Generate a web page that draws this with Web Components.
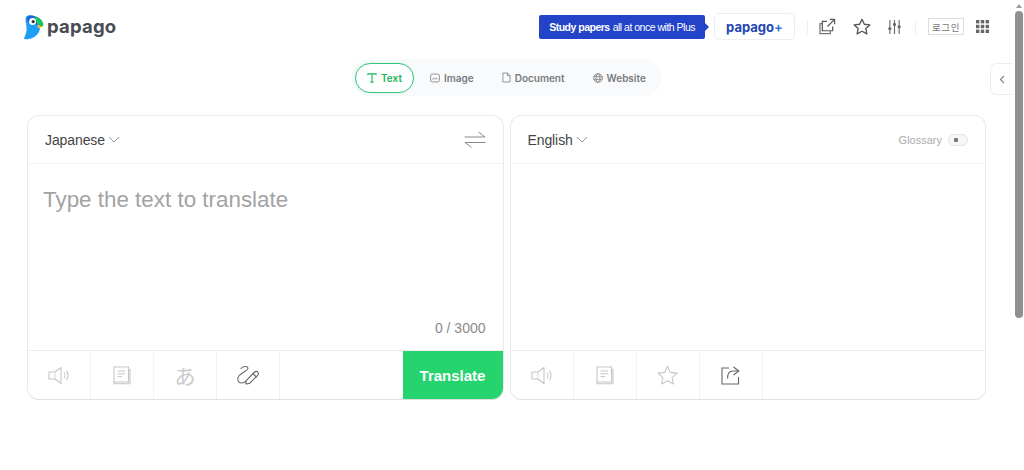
<!DOCTYPE html>
<html lang="en">
<head>
<meta charset="utf-8">
<title>papago</title>
<style>
    html, body { margin: 0; padding: 0; background: #fff; overflow: hidden; }
</style>
</head>
<body>
<pg-root></pg-root>
<script>
/**
 * Inline icons used across the page, keyed by name.
 * @type {Object<string, string>}
 */
const ICONS = {
    logo: `<svg width="20" height="25" viewBox="0 0 20 25">
        <path d="M5 0.5C2.5 0.5 1.5 2 1.5 4.5C1.5 8.5 3 11 2.6 15C2.3 18 1.2 20.6 0 23.5C0.5 24.4 2.5 24.6 5 24C10.5 22.8 15 19 15.8 14.2C16 12.8 15.8 11.6 15.5 10.5L12 8L12 2C10 0.8 7.5 0.5 5 0.5Z" fill="#1d9ff5"/>
        <path d="M5 0.5C8 0.2 11 0.8 13.5 2.2C16.6 3.8 18.8 6 19.2 9.6C19.3 10.8 18.2 12 17 11.4C15.8 10.8 15 9.8 13.4 9.8L8 9L3.4 6.4C2.9 3.4 3 1.2 5 0.5Z" fill="#1f63d8"/>
        <path d="M10 2C13.5 2 17 4 18.8 7.4C19.4 8.7 19.4 10.4 18.6 11.6C17.6 10.3 15.8 9.6 13.6 9.8C12.6 6.8 11.4 4.3 10 2Z" fill="#16c75e"/>
        <circle cx="8.6" cy="6.6" r="3.5" fill="#fff"/>
        <circle cx="9.2" cy="6.6" r="1.6" fill="#333"/>
        <path d="M13.4 9.8L18.2 11.2C17.4 13 15 13.4 13.6 12.4Z" fill="#f7c21b"/>
    </svg>`,
    share: `<svg width="17" height="17" viewBox="0 0 18 18" fill="none" stroke="#555" stroke-width="1.3">
        <path d="M11.5 1.5H16.5V6.5M16.5 1.5L9 9"/>
        <path d="M8.5 3.5H3.5V13.5H14.5V9"/>
        <path d="M3.5 6H1V16.5H12V13.5" stroke="#777"/>
    </svg>`,
    star: `<svg width="18" height="17" viewBox="0 0 19 18" fill="none" stroke="#555" stroke-width="1.4" stroke-linejoin="round">
        <path d="M9.5 1.4L12 6.6L17.8 7.3L13.5 11.2L14.7 16.8L9.5 14L4.3 16.8L5.5 11.2L1.2 7.3L7 6.6Z"/>
    </svg>`,
    sliders: `<svg width="13" height="16" viewBox="0 0 14 16" fill="#666">
        <rect x="1.4" y="0.5" width="1.2" height="15"/><rect x="6.4" y="0.5" width="1.2" height="15"/><rect x="11.4" y="0.5" width="1.2" height="15"/>
        <rect x="0.4" y="8.5" width="3.2" height="2.6"/><rect x="5.4" y="4" width="3.2" height="2.6"/><rect x="10.4" y="6.5" width="3.2" height="2.6"/>
    </svg>`,
    apps: `<svg width="13" height="13" viewBox="0 0 13 13" fill="#666">
        <rect width="3.4" height="3.4"/><rect x="4.8" width="3.4" height="3.4"/><rect x="9.6" width="3.4" height="3.4"/>
        <rect y="4.8" width="3.4" height="3.4"/><rect x="4.8" y="4.8" width="3.4" height="3.4"/><rect x="9.6" y="4.8" width="3.4" height="3.4"/>
        <rect y="9.6" width="3.4" height="3.4"/><rect x="4.8" y="9.6" width="3.4" height="3.4"/><rect x="9.6" y="9.6" width="3.4" height="3.4"/>
    </svg>`,
    tabText: `<svg width="10" height="10" viewBox="0 0 11 11" fill="none" stroke="#1cb45c" stroke-width="1.2"><path d="M1 2.6V1H10V2.6M5.5 1V10M3.8 10H7.2"/></svg>`,
    tabImage: `<svg width="10" height="10" viewBox="0 0 11 11" fill="none" stroke="#888" stroke-width="1"><rect x="0.7" y="1.2" width="9.6" height="8.6" rx="1.8"/><path d="M2.6 7.2L4.2 5.8L5.6 6.8L7 5.6L8.4 7" /></svg>`,
    tabDoc: `<svg width="9" height="11" viewBox="0 0 10 12" fill="none" stroke="#888" stroke-width="1"><path d="M1 1H6L9 4V11H1Z" stroke-linejoin="round"/><path d="M6 1V4H9"/></svg>`,
    tabWeb: `<svg width="10" height="10" viewBox="0 0 11 11" fill="none" stroke="#888" stroke-width="1"><circle cx="5.5" cy="5.5" r="4.8"/><ellipse cx="5.5" cy="5.5" rx="2.2" ry="4.8"/><path d="M0.8 4H10.2M0.8 7H10.2"/></svg>`,
    swap: `<svg width="22" height="17" viewBox="0 0 22 17" fill="none" stroke="#888" stroke-width="1"><path d="M0.5 6H21L14.5 1"/><path d="M21.5 11.5H1L7.5 16.5"/></svg>`,
    speaker: `<svg width="22" height="19" viewBox="0 0 22 18" fill="none" stroke="#c6c6c6" stroke-width="1.1" stroke-linejoin="round"><path d="M1 5.5H7L13 1V17L7 12.5H1Z"/><path d="M7 5.5V12.5" stroke="#ddd"/><path d="M16 6C17.3 7.6 17.3 10.4 16 12M18.4 4.4C20.6 7 20.6 11 18.4 13.6"/></svg>`,
    book: `<svg width="18" height="19" viewBox="0 0 18 19" fill="none" stroke="#c6c6c6" stroke-width="1.1"><path d="M1 1H15.5V16H1Z"/><path d="M1 16V17.8H17V3.5H15.5"/><path d="M4.5 5H12M4.5 7.8H12M4.5 10.6H9" stroke-width="1"/></svg>`,
    pen: `<svg width="24" height="20" viewBox="0 0 24 20" fill="none" stroke="#666" stroke-width="1.1" stroke-linecap="round" stroke-linejoin="round"><path d="M5 3.5C6.5 1.2 11.5 0.6 12 3.2C12.4 5.4 5.5 7.6 2.8 11C0.4 14 2 18 5.6 18C7.4 18 8.6 17.4 9.6 16.4"/><path d="M10 15.8L18.6 7C19.6 6 21.4 6.2 22 7.2C22.8 8.4 22.4 9.6 21.6 10.4L13.6 18.4L9.8 19Z"/><path d="M17 8.8L20.4 12"/></svg>`,
    starOff: `<svg width="21" height="20" viewBox="0 0 21 20" fill="none" stroke="#c6c6c6" stroke-width="1.1" stroke-linejoin="round"><path d="M10.5 1.2L13.4 7.4L20 8.1L15.1 12.6L16.5 19L10.5 15.8L4.5 19L5.9 12.6L1 8.1L7.6 7.4Z"/></svg>`,
    export: `<svg width="19" height="19" viewBox="0 0 19 19" fill="none" stroke="#666" stroke-width="1.1"><path d="M8 2H1V18H17.5V11"/><path d="M12.5 1L17.8 5L12.5 9"/><path d="M17.5 5H12C8.5 5 6.5 7.5 6.5 12.5" /></svg>`
};

/**
 * PgHeader is the top bar with the logo, the Plus banner and the tool icons.
 *
 * @customElement
 */
class PgHeader extends HTMLElement {
    constructor() {
        super();
        this.attachShadow({mode: 'open'});
    }

    connectedCallback() {
        const style = `
            <style>
                :host { display: flex; align-items: center; height: 53px; padding: 0 24px 0 24px; font-family: "Liberation Sans", Arial, sans-serif; }
                .brand { display: flex; align-items: center; gap: 3px; margin-top: 1px; }
                .brand span { font: 700 18.5px/20px Inter, sans-serif; color: #4a4c54; letter-spacing: 0.2px; margin-top: -3px; }
                .spacer { flex: 1; }
                .banner { position: relative; display: flex; align-items: center; height: 24px; padding: 0 10px 0 10px; background: #2343c9; border-radius: 2px; color: #fff; font-size: 10.5px; letter-spacing: -0.5px; white-space: nowrap; }
                .banner b { margin-right: 3px; }
                .banner::after { content: ''; position: absolute; right: -4px; top: 8px; border-left: 4px solid #2343c9; border-top: 4px solid transparent; border-bottom: 4px solid transparent; }
                .plus { display: flex; align-items: center; justify-content: center; box-sizing: border-box; width: 81px; height: 27px; margin: 0 12px 0 9px; border: 1px solid #eee; border-radius: 5px; color: #2346b4; font: 700 13px Inter, sans-serif; }
                .plus span { color: #3f74d8; }
                .sep { width: 1px; height: 14px; background: #eee; }
                .tool { display: flex; }
                .login { display: flex; align-items: center; justify-content: center; box-sizing: border-box; width: 36px; height: 17px; border: 1px solid #ddd; font: 9.5px "Noto Sans CJK KR", sans-serif; color: #777; letter-spacing: 0.6px; }
            </style>
        `;
        const template = `
            <div class="brand">${ICONS.logo}<span>papago</span></div>
            <div class="spacer"></div>
            <div class="banner"><b>Study papers</b> all at once with Plus</div>
            <div class="plus">papago<span>+</span></div>
            <div class="sep"></div>
            <div class="tool" style="margin-left:11px">${ICONS.share}</div>
            <div class="tool" style="margin-left:17px">${ICONS.star}</div>
            <div class="tool" style="margin-left:17px">${ICONS.sliders}</div>
            <div class="sep" style="margin-left:14px"></div>
            <div class="login" style="margin-left:12px">로그인</div>
            <div class="tool" style="margin-left:12px">${ICONS.apps}</div>
        `;
        this.shadowRoot.innerHTML = style + template;
    }
}

/**
 * PgTabs is the pill switching between text, image, document and website.
 *
 * @customElement
 */
class PgTabs extends HTMLElement {
    constructor() {
        super();
        this.attachShadow({mode: 'open'});
    }

    connectedCallback() {
        const style = `
            <style>
                :host { display: flex; justify-content: center; height: 62px; font: 600 10px Inter, sans-serif; color: #777b7f; }
                .pill { display: flex; align-items: center; gap: 28px; box-sizing: border-box; width: 309px; height: 37px; margin-top: 6px; padding: 0 15px 0 3px; background: #f8fafc; border-radius: 19px; box-shadow: 0 0 1px #e8ecf0; }
                .tab { display: flex; align-items: center; gap: 4px; white-space: nowrap; }
                .active { box-sizing: border-box; width: 59px; height: 30px; margin-right: -12px; justify-content: center; background: #fff; border: 1px solid #35c47a; border-radius: 15px; color: #1cb45c; box-shadow: 0 0 3px #d8f2e2; }
            </style>
        `;
        const template = `
            <div class="pill">
                <div class="tab active">${ICONS.tabText}Text</div>
                <div class="tab">${ICONS.tabImage}Image</div>
                <div class="tab">${ICONS.tabDoc}Document</div>
                <div class="tab">${ICONS.tabWeb}Website</div>
            </div>
        `;
        this.shadowRoot.innerHTML = style + template;
    }
}

/**
 * PgPanel is one translation card: a head, a body and an action row.
 * Content comes in by the slots head, body and actions.
 *
 * @customElement
 */
class PgPanel extends HTMLElement {
    constructor() {
        super();
        this.attachShadow({mode: 'open'});
    }

    connectedCallback() {
        const style = `
            <style>
                :host { display: flex; flex-direction: column; flex: 1; box-sizing: border-box; height: 285px; background: #fff; border: 1px solid #eaeaea; border-bottom-color: #dfdfdf; border-radius: 12px; overflow: hidden; font-family: "Liberation Sans", Arial, sans-serif; }
                .head { display: flex; align-items: center; height: 47px; padding: 0 17px 0 17px; border-bottom: 1px solid #f3f3f3; }
                .body { flex: 1; display: flex; flex-direction: column; min-height: 0; }
                .actions { display: flex; height: 48px; border-top: 1px solid #eee; }
            </style>
        `;
        const template = `
            <div class="head"><slot name="head"></slot></div>
            <div class="body"><slot name="body"></slot></div>
            <div class="actions"><slot name="actions"></slot></div>
        `;
        this.shadowRoot.innerHTML = style + template;
    }
}

/**
 * PgLang is the language picker with its small chevron.
 *
 * @customElement
 */
class PgLang extends HTMLElement {
    constructor() {
        super();
        this.attachShadow({mode: 'open'});
    }

    connectedCallback() {
        const style = `
            <style>
                :host { display: flex; align-items: center; gap: 3px; font: 14px "Liberation Sans", Arial, sans-serif; letter-spacing: -0.1px; color: #444; }
            </style>
        `;
        const template = `
            <slot></slot>
            <svg width="12" height="7" viewBox="0 0 12 7" fill="none" stroke="#999" stroke-width="1"><path d="M1 1L6 6L11 1"/></svg>
        `;
        this.shadowRoot.innerHTML = style + template;
    }
}

/**
 * PgAction is one square cell of the action row of a panel.
 * The attribute icon names the entry of ICONS to draw.
 *
 * @customElement
 */
class PgAction extends HTMLElement {
    constructor() {
        super();
        this.attachShadow({mode: 'open'});
    }

    connectedCallback() {
        const style = `
            <style>
                :host { display: flex; align-items: center; justify-content: center; box-sizing: border-box; width: 63px; border-right: 1px solid #f3f3f3; color: #ccc; font: 21px "Noto Sans CJK JP", sans-serif; }
            </style>
        `;
        const icon = this.getAttribute('icon');
        this.shadowRoot.innerHTML = style + (icon ? ICONS[icon] : '<slot></slot>');
    }
}

/**
 * PgRoot is the application shell: the page column and the scroll rail.
 *
 * @customElement
 */
class PgRoot extends HTMLElement {
    constructor() {
        super();
        this.attachShadow({mode: 'open'});
    }

    connectedCallback() {
        const style = `
            <style>
                :host { display: flex; height: 470px; font-family: "Liberation Sans", Arial, sans-serif; }
                .page { position: relative; flex: 1; min-width: 0; }
                .work { display: flex; gap: 6px; padding: 0 27px; }
                .side { position: absolute; right: 0; top: 63px; display: flex; align-items: center; justify-content: center; box-sizing: border-box; width: 23px; height: 32px; background: #fff; border: 1px solid #eee; border-right: 0; border-radius: 6px 0 0 6px; }
                .rail { display: flex; flex-direction: column; align-items: center; width: 11px; }
                .rail i { display: block; margin: 4px 0 3px; border-left: 3px solid transparent; border-right: 3px solid transparent; border-bottom: 4px solid #999; }
                .rail b { display: block; width: 8px; height: 307px; background: #8f8f8f; border-radius: 4px; margin-left: 1px; }
                .swap { margin-left: auto; display: flex; }
                .gloss { margin-left: auto; display: flex; align-items: center; gap: 6px; font-size: 11px; color: #aaa; }
                .toggle { display: flex; align-items: center; box-sizing: border-box; width: 20px; height: 12px; padding-left: 5px; border: 1px solid #e4e4e4; border-radius: 6px; background: #f7f7f7; }
                .toggle::before { content: ''; width: 4px; height: 4px; background: #777; border-radius: 1px; }
                .input { flex: 1; padding: 23px 15px 0; font-size: 22.4px; line-height: 26px; color: #a3a3a3; }
                .count { padding: 0 17px 14px; text-align: right; font-size: 14px; line-height: 16px; color: #8a8a8a; }
                .grow { flex: 1; }
                .go { display: flex; align-items: center; justify-content: center; width: 100px; background: #25d46e; color: #fff; font-weight: 700; font-size: 15px; }
                [slot=actions] { display: flex; flex: 1; }
                [slot=head] { display: flex; align-items: center; flex: 1; }
                [slot=body] { display: flex; flex-direction: column; flex: 1; }
            </style>
        `;
        const template = `
            <div class="page">
                <pg-header></pg-header>
                <pg-tabs></pg-tabs>
                <div class="work">
                    <pg-panel>
                        <div slot="head">
                            <pg-lang>Japanese</pg-lang>
                            <div class="swap">${ICONS.swap}</div>
                        </div>
                        <div slot="body">
                            <div class="input">Type the text to translate</div>
                            <div class="count">0 / 3000</div>
                        </div>
                        <div slot="actions">
                            <pg-action icon="speaker"></pg-action>
                            <pg-action icon="book"></pg-action>
                            <pg-action>あ</pg-action>
                            <pg-action icon="pen"></pg-action>
                            <div class="grow"></div>
                            <div class="go">Translate</div>
                        </div>
                    </pg-panel>
                    <pg-panel>
                        <div slot="head">
                            <pg-lang>English</pg-lang>
                            <div class="gloss">Glossary<span class="toggle"></span></div>
                        </div>
                        <div slot="body"></div>
                        <div slot="actions">
                            <pg-action icon="speaker"></pg-action>
                            <pg-action icon="book"></pg-action>
                            <pg-action icon="starOff"></pg-action>
                            <pg-action icon="export"></pg-action>
                        </div>
                    </pg-panel>
                </div>
                <div class="side"><svg width="6" height="9" viewBox="0 0 6 9" fill="none" stroke="#888" stroke-width="1.2"><path d="M5 1L1.5 4.5L5 8"/></svg></div>
            </div>
            <div class="rail"><i></i><b></b></div>
        `;
        this.shadowRoot.innerHTML = style + template;
    }
}

customElements.define('pg-header', PgHeader);
customElements.define('pg-tabs', PgTabs);
customElements.define('pg-panel', PgPanel);
customElements.define('pg-lang', PgLang);
customElements.define('pg-action', PgAction);
customElements.define('pg-root', PgRoot);
</script>
</body>
</html>
